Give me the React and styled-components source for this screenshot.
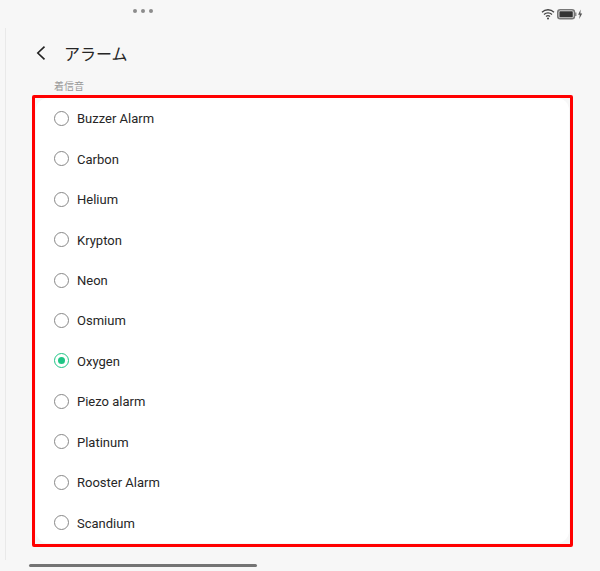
import React, { useState } from "react";
import styled, { createGlobalStyle } from "styled-components";

const sounds = [
  "Buzzer Alarm",
  "Carbon",
  "Helium",
  "Krypton",
  "Neon",
  "Osmium",
  "Oxygen",
  "Piezo alarm",
  "Platinum",
  "Rooster Alarm",
  "Scandium",
];

const App = () => {
  const [selected, setSelected] = useState("Oxygen");
  return (
    <Page>
      <GlobalStyle />
      <StatusBar>
        <Dots>
          <Dot />
          <Dot />
          <Dot />
        </Dots>
        <StatusIcons />
      </StatusBar>
      <Panel>
        <Header>
          <BackButton type="button" aria-label="戻る">
            <svg width="10" height="14" viewBox="0 0 10 14" fill="none">
              <path d="M8.5 0.6L1.8 7l6.7 6.4" stroke="#222" strokeWidth="1.6" />
            </svg>
          </BackButton>
          <Title>アラーム</Title>
        </Header>
        <SectionLabel id="ringtone">着信音</SectionLabel>
        <Frame>
          <SoundList role="radiogroup" aria-labelledby="ringtone">
            {sounds.map((name) => (
              <SoundRow key={name}>
                <Radio
                  name="sound"
                  value={name}
                  checked={selected === name}
                  onChange={() => setSelected(name)}
                />
                <SoundName>{name}</SoundName>
              </SoundRow>
            ))}
          </SoundList>
        </Frame>
      </Panel>
      <Footer>
        <HomeBar />
      </Footer>
    </Page>
  );
};

const StatusIcons = () => (
  <svg width="42" height="12" viewBox="0 0 42 12" fill="none">
    <g stroke="#444" strokeWidth="1.3">
      <path d="M1 4.2a8.6 8.6 0 0 1 12 0" />
      <path d="M3 6.4a5.9 5.9 0 0 1 8 0" />
      <path d="M5 8.4a3.1 3.1 0 0 1 4 0" />
    </g>
    <circle cx="7" cy="10.4" r="1" fill="#3c3c3c" />
    <rect x="16.8" y="1.8" width="16.6" height="8.8" rx="2.4" stroke="#777" strokeWidth="1.6" />
    <rect x="18.4" y="3.2" width="13.4" height="6" rx="0.6" fill="#333" />
    <path d="M34.8 4.5v3.4" stroke="#777" strokeWidth="1.2" />
    <path d="M39.6 1.6l-2.5 5.2h1.7l-.6 4.2 3-5.6h-1.8z" fill="#555" />
  </svg>
);

const GlobalStyle = createGlobalStyle`
  * {
    box-sizing: border-box;
  }

  body {
    margin: 0;
    background: #f7f7f7;
    color: #262626;
    font-family: Roboto, "Noto Sans CJK JP", sans-serif;
  }
`;

const Page = styled.div`
  display: flex;
  flex-direction: column;
  min-height: 100vh;
`;

const StatusBar = styled.div`
  display: flex;
  align-items: center;
  justify-content: space-between;
  height: 28px;
  padding: 0 17px 0 133px;
`;

const Dots = styled.div`
  display: flex;
  gap: 4px;
  padding-bottom: 6px;
`;

const Dot = styled.span`
  width: 4px;
  height: 4px;
  border-radius: 50%;
  background: #8c8c8c;
`;

const Panel = styled.main`
  display: flex;
  flex: 1;
  flex-direction: column;
  margin-left: 5px;
  padding: 0 27px 13px 26px;
  border-left: 1px solid #e9e9e9;
`;

const Header = styled.header`
  display: flex;
  align-items: center;
  gap: 18px;
  height: 50px;
  padding-left: 4px;
`;

const BackButton = styled.button`
  display: flex;
  padding: 0;
  border: none;
  background: transparent;
  cursor: pointer;
`;

const Title = styled.h1`
  margin: 0;
  padding-top: 4px;
  font-size: 16px;
  font-weight: 400;
  line-height: 24px;
`;

const SectionLabel = styled.h2`
  margin: 0;
  padding-left: 22px;
  color: #999;
  font-size: 10px;
  font-weight: 400;
  line-height: 17px;
`;

const Frame = styled.section`
  display: flex;
  flex: 1;
  padding-bottom: 1px;
  border: 3px solid #f00;
  border-radius: 2px;
`;

const SoundList = styled.div`
  display: grid;
  flex: 1;
  grid-auto-rows: 1fr;
  margin: 0 1px;
  border-radius: 12px;
  background: #fff;
`;

const SoundRow = styled.label`
  display: flex;
  align-items: center;
  gap: 8px;
  padding-left: 18px;
  cursor: pointer;
`;

const SoundName = styled.span`
  padding-top: 2px;
  font-size: 13px;
  line-height: 20px;
`;

const Radio = styled.input.attrs({ type: "radio" })`
  display: grid;
  place-content: center;
  width: 15px;
  height: 15px;
  margin: 0;
  border: 1px solid #888;
  border-radius: 50%;
  appearance: none;
  cursor: pointer;

  &:checked {
    border-color: #1fc585;
  }

  &:checked::before {
    content: "";
    width: 7px;
    height: 7px;
    border-radius: 50%;
    background: #1fc585;
  }
`;

const Footer = styled.footer`
  height: 11px;
  padding: 4px 29px;
`;

const HomeBar = styled.div`
  width: 42%;
  height: 3px;
  border-radius: 2px;
  background: #747474;
`;

export default App;
